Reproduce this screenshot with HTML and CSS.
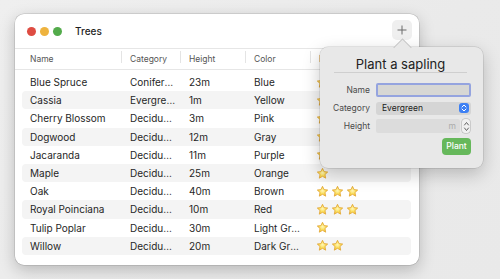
FILE: index.html
```html
<!DOCTYPE html>
<html lang="en">
<head>
<meta charset="utf-8">
<title>Trees</title>
<link rel="stylesheet" href="styles.css">
</head>
<body>
<svg class="defs" width="0" height="0" aria-hidden="true">
  <defs>
    <radialGradient id="starfill" cx="50%" cy="45%" r="60%">
      <stop offset="0%" stop-color="#fff6b8"/>
      <stop offset="50%" stop-color="#fbdf5e"/>
      <stop offset="100%" stop-color="#f2c030"/>
    </radialGradient>
    <symbol id="star" viewBox="0 0 24 24">
      <path d="M12 2.4 L14.9 8.5 L21.6 9.3 L16.6 13.9 L17.9 20.6 L12 17.3 L6.1 20.6 L7.4 13.9 L2.4 9.3 L9.1 8.5 Z" fill="url(#starfill)" stroke="#e2a534" stroke-width="1.5" stroke-linejoin="round"/>
    </symbol>
  </defs>
</svg>

<div class="desktop">
  <div class="window">
    <div class="titlebar">
      <div class="lights">
        <span class="light red"></span>
        <span class="light yellow"></span>
        <span class="light green"></span>
      </div>
      <div class="title">Trees</div>
      <button class="add" type="button" aria-label="Add">
        <svg width="10" height="10" viewBox="0 0 10 10"><path d="M5 0.5 V9.5 M0.5 5 H9.5" stroke="#6b6b6b" stroke-width="1" fill="none"/></svg>
      </button>
    </div>

    <div class="thead">
      <div class="th">Name</div>
      <div class="th">Category</div>
      <div class="th">Height</div>
      <div class="th">Color</div>
      <div class="th">Rating</div>
    </div>

    <div class="tbody">
      <div class="tr"><div class="td">Blue Spruce</div><div class="td">Coniferous</div><div class="td">23m</div><div class="td">Blue</div><div class="td stars"><svg class="star"><use href="#star"/></svg><svg class="star"><use href="#star"/></svg></div></div>
      <div class="tr alt"><div class="td">Cassia</div><div class="td">Evergreen</div><div class="td">1m</div><div class="td">Yellow</div><div class="td stars"><svg class="star"><use href="#star"/></svg></div></div>
      <div class="tr"><div class="td">Cherry Blossom</div><div class="td">Deciduous</div><div class="td">3m</div><div class="td">Pink</div><div class="td stars"><svg class="star"><use href="#star"/></svg><svg class="star"><use href="#star"/></svg><svg class="star"><use href="#star"/></svg></div></div>
      <div class="tr alt"><div class="td">Dogwood</div><div class="td">Deciduous</div><div class="td">12m</div><div class="td">Gray</div><div class="td stars"><svg class="star"><use href="#star"/></svg><svg class="star"><use href="#star"/></svg></div></div>
      <div class="tr"><div class="td">Jacaranda</div><div class="td">Deciduous</div><div class="td">11m</div><div class="td">Purple</div><div class="td stars"><svg class="star"><use href="#star"/></svg><svg class="star"><use href="#star"/></svg><svg class="star"><use href="#star"/></svg></div></div>
      <div class="tr alt"><div class="td">Maple</div><div class="td">Deciduous</div><div class="td">25m</div><div class="td">Orange</div><div class="td stars"><svg class="star"><use href="#star"/></svg></div></div>
      <div class="tr"><div class="td">Oak</div><div class="td">Deciduous</div><div class="td">40m</div><div class="td">Brown</div><div class="td stars"><svg class="star"><use href="#star"/></svg><svg class="star"><use href="#star"/></svg><svg class="star"><use href="#star"/></svg></div></div>
      <div class="tr alt"><div class="td">Royal Poinciana</div><div class="td">Deciduous</div><div class="td">10m</div><div class="td">Red</div><div class="td stars"><svg class="star"><use href="#star"/></svg><svg class="star"><use href="#star"/></svg><svg class="star"><use href="#star"/></svg></div></div>
      <div class="tr"><div class="td">Tulip Poplar</div><div class="td">Deciduous</div><div class="td">30m</div><div class="td">Light Green</div><div class="td stars"><svg class="star"><use href="#star"/></svg></div></div>
      <div class="tr alt"><div class="td">Willow</div><div class="td">Deciduous</div><div class="td">20m</div><div class="td">Dark Green</div><div class="td stars"><svg class="star"><use href="#star"/></svg><svg class="star"><use href="#star"/></svg></div></div>
    </div>
  </div>

  <div class="popover">
    <div class="pop-title">Plant a sapling</div>
    <div class="form">
      <label class="lbl">Name</label>
      <div class="field focus"></div>
      <label class="lbl">Category</label>
      <div class="popup">
        <span class="popup-text">Evergreen</span>
        <span class="popup-btn">
          <svg width="6" height="8" viewBox="0 0 6 8"><path d="M1 3 L3 1 L5 3 M1 5 L3 7 L5 5" stroke="#fff" stroke-width="1" fill="none" stroke-linecap="round" stroke-linejoin="round"/></svg>
        </span>
      </div>
      <label class="lbl">Height</label>
      <div class="height-row">
        <div class="field plain"><span class="unit">m</span></div>
        <span class="stepper">
          <svg width="7" height="13" viewBox="0 0 7 13"><path d="M1.5 5 L3.5 2.5 L5.5 5 M1.5 8 L3.5 10.5 L5.5 8" stroke="#555" stroke-width="0.9" fill="none" stroke-linecap="round" stroke-linejoin="round"/></svg>
        </span>
      </div>
      <button class="plant" type="button">Plant</button>
    </div>
  </div>
</div>
</body>
</html>
```

FILE: styles.css
```css
* { box-sizing: border-box; }

html, body {
  margin: 0;
  padding: 0;
}

body {
  width: 500px;
  height: 279px;
  overflow: hidden;
  background: #ebebeb;
  font-family: Inter, "Liberation Sans", Arial, sans-serif;
  color: #262626;
}

.defs {
  position: absolute;
  width: 0;
  height: 0;
  overflow: hidden;
}

.desktop {
  position: relative;
  width: 500px;
  height: 279px;
  background: linear-gradient(135deg, #efefef 0%, #eaeaea 60%, #e9e9e9 100%);
}

/* window */
.window {
  position: absolute;
  left: 15px;
  top: 14px;
  width: 404px;
  height: 251px;
  background: #ffffff;
  border-radius: 9px;
  box-shadow: 0 0 0 0.5px rgba(0, 0, 0, 0.18), 0 5px 16px rgba(0, 0, 0, 0.22);
  display: flex;
  flex-direction: column;
  overflow: hidden;
}

.titlebar {
  height: 34px;
  flex: none;
  display: flex;
  align-items: center;
  padding: 0 7px 0 12px;
}

.lights {
  display: flex;
  gap: 4px;
}

.light {
  width: 9px;
  height: 9px;
  border-radius: 50%;
  display: block;
}
.light.red { background: #de4c42; }
.light.yellow { background: #eeb33e; }
.light.green { background: #53ab4b; }

.title {
  margin-left: 13px;
  font-size: 10px;
  font-weight: 500;
  color: #1f1f1f;
}

.add {
  margin-left: auto;
  width: 20px;
  height: 20px;
  border: none;
  border-radius: 5px;
  background: #efefef;
  padding: 0;
  display: flex;
  align-items: center;
  justify-content: center;
  margin-top: -2px;
}

/* table */
.thead,
.tr {
  display: grid;
  grid-template-columns: 99px 59px 65px 65px 1fr;
  align-items: center;
}

.thead {
  height: 22px;
  flex: none;
  border-top: 1px solid #e6e6e6;
  border-bottom: 1px solid #e6e6e6;
  padding: 0 8px 0 7px;
}

.th {
  font-size: 8.5px;
  color: #555555;
  padding-left: 9px;
  position: relative;
  white-space: nowrap;
}
.th:first-child { padding-left: 8px; }
.th + .th::before {
  content: "";
  position: absolute;
  left: 0;
  top: -3px;
  height: 12px;
  width: 1px;
  background: #e4e4e4;
}

.tbody {
  padding: 3px 8px 0 7px;
}

.tr {
  height: 18.2px;
  border-radius: 4px;
}
.tr.alt { background: #f4f4f4; }

.td {
  font-size: 10px;
  padding-left: 9px;
  white-space: nowrap;
  overflow: hidden;
  text-overflow: ellipsis;
  padding-right: 4px;
}
.td:first-child { padding-left: 8px; }
.td:nth-child(4) { padding-right: 8px; }

.stars {
  display: flex;
  gap: 2px;
  padding-left: 6px;
  align-items: center;
}

.star {
  width: 13px;
  height: 13px;
  flex: none;
}

/* popover */
.popover {
  position: absolute;
  left: 320px;
  top: 47px;
  width: 163px;
  height: 121px;
  background: #e8e8e8;
  border-radius: 8px;
  box-shadow: 0 0 0 0.5px rgba(0, 0, 0, 0.16), 0 6px 18px rgba(0, 0, 0, 0.22);
  padding: 9px 12px 0 14px;
}

.popover::before {
  content: "";
  position: absolute;
  left: 76px;
  top: -6px;
  width: 12px;
  height: 12px;
  background: #e8e8e8;
  transform: rotate(45deg);
  border-top: 0.5px solid rgba(0, 0, 0, 0.14);
  border-left: 0.5px solid rgba(0, 0, 0, 0.14);
}

.pop-title {
  position: relative;
  font-size: 13px;
  line-height: 16px;
  text-align: center;
  color: #222222;
  border-bottom: 1px solid #cfcfcf;
  margin-right: 4px;
}

.form {
  margin: 10px 0 0 -14px;
  display: grid;
  grid-template-columns: 50px 95px;
  column-gap: 6px;
  row-gap: 4px;
  grid-auto-rows: 14px;
  align-items: center;
}

.lbl {
  font-size: 8.5px;
  color: #4a4a4a;
  text-align: right;
  white-space: nowrap;
}

.field {
  height: 14px;
  border-radius: 2px;
}

.field.focus {
  background: #d7d7d4;
  border: 2px solid #95a4df;
}

.popup {
  height: 13px;
  background: #d5d5d5;
  border-radius: 3px;
  display: flex;
  align-items: center;
  padding-left: 6px;
}

.popup-text {
  font-size: 8.5px;
  color: #222222;
}

.popup-btn {
  margin-left: auto;
  margin-right: 2px;
  width: 10px;
  height: 10px;
  border-radius: 3px;
  background: #3d80f4;
  display: flex;
  align-items: center;
  justify-content: center;
}

.height-row {
  display: flex;
  align-items: center;
  gap: 2px;
  height: 14px;
}

.field.plain {
  flex: 1;
  background: #dcdcdc;
  display: flex;
  align-items: center;
  justify-content: flex-end;
  padding-right: 4px;
}

.unit {
  font-size: 8.5px;
  color: #ababab;
}

.stepper {
  width: 8px;
  height: 14px;
  border-radius: 3px;
  background: #f1f1f1;
  box-shadow: 0 0 0 0.5px rgba(0, 0, 0, 0.25);
  display: flex;
  align-items: center;
  justify-content: center;
  margin-right: 1px;
}

.plant {
  grid-column: 2;
  justify-self: end;
  margin-top: 4px;
  margin-right: 0;
  width: 29px;
  height: 17px;
  border: none;
  border-radius: 4px;
  background: #66b85b;
  color: #ffffff;
  font-family: Inter, "Liberation Sans", Arial, sans-serif;
  font-size: 8.5px;
  font-weight: 500;
  padding: 0;
}
```
